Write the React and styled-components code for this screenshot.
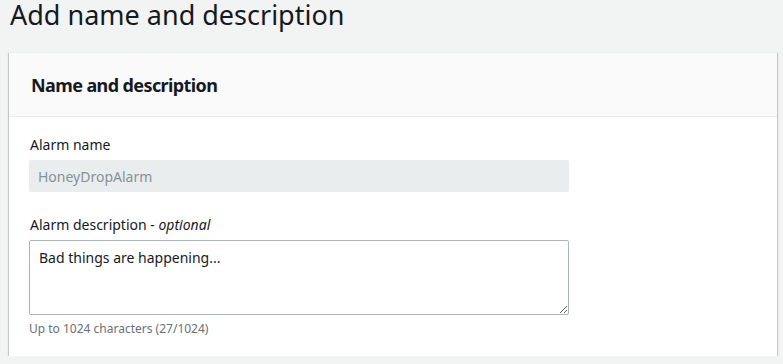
import React from 'react';
import styled, { createGlobalStyle } from 'styled-components';

const GlobalStyle = createGlobalStyle`
  body {
    margin: 0;
    background: #f2f3f3;
    font-family: "Noto Sans", "Open Sans", sans-serif;
    color: #16191f;
  }
`;

const Page = styled.div`
  padding: 0 6px 0 9px;
`;

const Title = styled.h1`
  margin: 0;
  padding: 0 1px 22px;
  font-size: 27px;
  font-weight: 400;
  line-height: 30px;
  color: #16191f;
`;

const Container = styled.div`
  width: 768px;
  background: #fff;
  border-top: 1px solid #eaeded;
  box-shadow: 0 1px 1px 0 rgba(0, 28, 36, 0.3), 1px 1px 1px 0 rgba(0, 28, 36, 0.15),
    -1px 1px 1px 0 rgba(0, 28, 36, 0.15);
`;

const Header = styled.div`
  display: flex;
  align-items: center;
  height: 63px;
  padding: 0 22px;
  background: #fafafa;
  border-bottom: 1px solid #eaeded;
`;

const HeaderTitle = styled.h2`
  margin: 0;
  font-size: 18px;
  font-weight: 700;
  letter-spacing: -0.6px;
  color: #16191f;
`;

const Body = styled.div`
  display: flex;
  flex-direction: column;
  gap: 22px;
  padding: 17px 20px 19px;
`;

const Field = styled.div`
  display: flex;
  flex-direction: column;
  width: 540px;
`;

const Label = styled.label`
  font-size: 14px;
  line-height: 22px;
  margin: 0 1px 4px;
  color: #16191f;
`;

const Input = styled.input`
  box-sizing: border-box;
  height: 32px;
  padding: 0 9px;
  border: none;
  border-radius: 2px;
  background: #eaeded;
  color: #879196;
  font-family: inherit;
  font-size: 14px;
`;

const TextArea = styled.textarea`
  box-sizing: border-box;
  height: 75px;
  padding: 6px 9px;
  border: 1px solid #aab7b8;
  border-radius: 2px;
  background: #fff;
  color: #16191f;
  font-family: inherit;
  font-size: 14px;
  line-height: 22px;
`;

const Hint = styled.div`
  margin-top: 6px;
  font-size: 12px;
  line-height: 16px;
  color: #687078;
`;

export default function App() {
  return (
    <Page>
      <GlobalStyle />
      <Title>Add name and description</Title>
      <Container>
        <Header>
          <HeaderTitle>Name and description</HeaderTitle>
        </Header>
        <Body>
          <Field>
            <Label>Alarm name</Label>
            <Input value="HoneyDropAlarm" disabled readOnly />
          </Field>
          <Field>
            <Label>
              Alarm description - <i>optional</i>
            </Label>
            <TextArea defaultValue="Bad things are happening..." />
            <Hint>Up to 1024 characters (27/1024)</Hint>
          </Field>
        </Body>
      </Container>
    </Page>
  );
}
